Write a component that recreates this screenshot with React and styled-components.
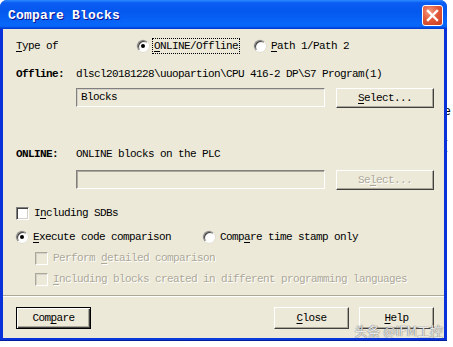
import styled, { createGlobalStyle } from "styled-components";

const GlobalStyle = createGlobalStyle`
  html, body {
    margin: 0;
    padding: 0;
    background: #ffffff;
    overflow: hidden;
  }
  * {
    box-sizing: border-box;
  }
`;

const FONT = `"Liberation Mono", "DejaVu Sans Mono", monospace`;

export default function App() {
  return (
    <>
      <GlobalStyle />
      <Screen>
        <Window>
          <TitleBar>
            <Title>Compare Blocks</Title>
            <CloseBox aria-label="Close">
              <svg width="13" height="13" viewBox="0 0 13 13">
                <path
                  d="M2 2 L11 11 M11 2 L2 11"
                  stroke="#fff"
                  strokeWidth="2.4"
                  strokeLinecap="square"
                />
              </svg>
            </CloseBox>
          </TitleBar>

          <Body>
            <Row $top={9}>
              <FieldLabel $width={121}>
                <u>T</u>ype of
              </FieldLabel>
              <Option $width={117}>
                <Radio $checked />
                <Focused>
                  <u>O</u>NLINE/Offline
                </Focused>
              </Option>
              <Option>
                <Radio />
                <Text>
                  <u>P</u>ath 1/Path 2
                </Text>
              </Option>
            </Row>

            <Row $top={12}>
              <BoldLabel>Offline:</BoldLabel>
              <Text>dlscl20181228\uuopartion\CPU 416-2 DP\S7 Program(1)</Text>
            </Row>

            <FieldRow $top={6}>
              <Field>Blocks</Field>
              <Button $width={98} $height={20}>
                <u>S</u>elect...
              </Button>
            </FieldRow>

            <Row $top={38}>
              <BoldLabel>ONLINE:</BoldLabel>
              <Text>ONLINE blocks on the PLC</Text>
            </Row>

            <FieldRow $top={8}>
              <Field $disabled />
              <Button $width={98} $height={20} $disabled>
                Se<u>l</u>ect...
              </Button>
            </FieldRow>

            <Row $top={15}>
              <Option>
                <Checkbox />
                <Text>
                  I<u>n</u>cluding SDBs
                </Text>
              </Option>
            </Row>

            <Row $top={8}>
              <Option $width={187}>
                <Radio $checked />
                <Text>
                  <u>E</u>xecute code comparison
                </Text>
              </Option>
              <Option>
                <Radio />
                <Text>
                  Comp<u>a</u>re time stamp only
                </Text>
              </Option>
            </Row>

            <Row $top={5} $indent={19}>
              <Option>
                <Checkbox $disabled />
                <Text $disabled>
                  Perform <u>d</u>etailed comparison
                </Text>
              </Option>
            </Row>

            <Row $top={5} $indent={19}>
              <Option>
                <Checkbox $disabled />
                <Text $disabled>
                  <u>I</u>ncluding blocks created in different programming
                  languages
                </Text>
              </Option>
            </Row>

            <Separator />

            <ButtonBar>
              <Button $width={75} $height={22} $default>
                Com<u>p</u>are
              </Button>
              <Spacer />
              <Button $width={75} $height={22}>
                <u>C</u>lose
              </Button>
              <Button $width={75} $height={22}>
                <u>H</u>elp
              </Button>
            </ButtonBar>

            <Watermark>头条 @iFM工控</Watermark>
          </Body>
        </Window>
        <Backdrop>
          <span>e</span>
          <span>[</span>
        </Backdrop>
      </Screen>
    </>
  );
}

const Screen = styled.div`
  display: flex;
  align-items: flex-start;
  width: 453px;
  height: 347px;
`;

const Window = styled.div`
  width: 447px;
  height: 341px;
  flex-shrink: 0;
  display: flex;
  flex-direction: column;
  border-radius: 7px 7px 0 0;
  background: linear-gradient(to right, #0831d9, #0a3cdb 50%, #0831d9);
  padding: 0 3px 3px 3px;
  box-shadow: inset 0 -1px 0 #001ea0;
`;

const TitleBar = styled.div`
  height: 29px;
  margin: 0 -3px;
  padding: 0 4px 0 8px;
  display: flex;
  align-items: center;
  justify-content: space-between;
  border-radius: 7px 7px 0 0;
  background: linear-gradient(
    to bottom,
    #2a8cff 0%,
    #0a5cf2 10%,
    #0558ee 40%,
    #0867fa 85%,
    #0662f6 92%,
    #003dd7 97%,
    #003dd7 100%
  );
`;

const Title = styled.span`
  font-family: ${FONT};
  font-weight: bold;
  font-size: 13px;
  letter-spacing: 0.2px;
  color: #ffffff;
  text-shadow: 1px 1px 0 #0f1089;
  padding-top: 1px;
`;

const CloseBox = styled.div`
  width: 21px;
  height: 21px;
  margin-top: 2px;
  display: flex;
  align-items: center;
  justify-content: center;
  border: 1px solid #ffffff;
  border-radius: 3px;
  background: radial-gradient(
    circle at 35% 30%,
    #f39c83 0%,
    #e35a3b 45%,
    #c7391c 100%
  );
`;

const Body = styled.div`
  position: relative;
  flex: 1;
  display: flex;
  flex-direction: column;
  background: #ece9d8;
  padding: 0 10px 9px 13px;
  font-family: ${FONT};
  font-size: 11px;
  letter-spacing: -0.6px;
  color: #000000;

  u {
    text-decoration: underline;
    text-underline-offset: 2px;
  }
`;

const Row = styled.div`
  display: flex;
  align-items: center;
  height: 16px;
  margin-top: ${(p) => p.$top}px;
  padding-left: ${(p) => p.$indent || 0}px;
  white-space: nowrap;
`;

const FieldLabel = styled.span`
  width: ${(p) => p.$width}px;
  flex-shrink: 0;
`;

const BoldLabel = styled.span`
  width: 60px;
  flex-shrink: 0;
  font-weight: bold;
`;

const Text = styled.span`
  color: ${(p) => (p.$disabled ? "#aca899" : "#000")};
  text-shadow: ${(p) => (p.$disabled ? "1px 1px 0 #ffffff" : "none")};
`;

const Focused = styled.span`
  outline: 1px dotted #000;
  outline-offset: 1px;
`;

const Option = styled.label`
  display: flex;
  align-items: center;
  gap: 5px;
  width: ${(p) => (p.$width ? `${p.$width}px` : "auto")};
  flex-shrink: 0;
`;

const Radio = styled.span`
  position: relative;
  width: 12px;
  height: 12px;
  flex-shrink: 0;
  border-radius: 50%;
  background: radial-gradient(circle at 60% 60%, #ffffff 40%, #dcdad0 100%);
  border: 1px solid;
  border-color: #808080 #ffffff #ffffff #808080;
  box-shadow: inset 1px 1px 0 #404040, 0 0 0 0.5px #d4d0c8;

  &::after {
    content: "";
    display: ${(p) => (p.$checked ? "block" : "none")};
    position: absolute;
    left: 3px;
    top: 3px;
    width: 4px;
    height: 4px;
    border-radius: 50%;
    background: #000;
  }
`;

const Checkbox = styled.span`
  width: 13px;
  height: 13px;
  flex-shrink: 0;
  background: ${(p) => (p.$disabled ? "#ece9d8" : "#ffffff")};
  border: 1px solid;
  border-color: ${(p) =>
    p.$disabled
      ? "#aca899 #ffffff #ffffff #aca899"
      : "#808080 #ffffff #ffffff #808080"};
  box-shadow: ${(p) =>
    p.$disabled
      ? "inset 1px 1px 0 #d4d0c8"
      : "inset 1px 1px 0 #404040, inset -1px -1px 0 #d4d0c8"};
`;

const FieldRow = styled.div`
  display: flex;
  align-items: flex-start;
  gap: 11px;
  height: 20px;
  margin-top: ${(p) => p.$top}px;
  padding-left: 60px;
`;

const Field = styled.div`
  width: 250px;
  height: 19px;
  padding: 1px 4px;
  line-height: 15px;
  background: #ece9d8;
  border: 1px solid;
  border-color: #808080 #ffffff #ffffff #808080;
  box-shadow: ${(p) =>
    p.$disabled ? "inset 1px 1px 0 #aca899" : "inset 1px 1px 0 #d4d0c8"};
`;

const Button = styled.div`
  width: ${(p) => p.$width}px;
  height: ${(p) => p.$height}px;
  flex-shrink: 0;
  display: flex;
  align-items: center;
  justify-content: center;
  background: #ece9d8;
  border: 1px solid;
  border-color: ${(p) =>
    p.$default ? "#000" : "#ffffff #404040 #404040 #ffffff"};
  box-shadow: ${(p) =>
    p.$default
      ? "inset 1px 1px 0 #ffffff, inset -1px -1px 0 #404040, inset -2px -2px 0 #aca899"
      : "inset -1px -1px 0 #aca899"};
  color: ${(p) => (p.$disabled ? "#aca899" : "#000")};
  text-shadow: ${(p) => (p.$disabled ? "1px 1px 0 #ffffff" : "none")};
`;

const Separator = styled.div`
  height: 2px;
  margin: 8px -10px 0 -13px;
  border-top: 1px solid #aca899;
  border-bottom: 1px solid #ffffff;
`;

const ButtonBar = styled.div`
  display: flex;
  align-items: center;
  gap: 10px;
  margin-top: 10px;
`;

const Spacer = styled.div`
  flex: 1;
`;

const Watermark = styled.span`
  position: absolute;
  right: 1px;
  bottom: 0;
  font-family: "Noto Sans CJK SC", "Noto Sans", sans-serif;
  font-size: 13px;
  line-height: 14px;
  letter-spacing: 0;
  color: rgba(255, 255, 255, 0.85);
  text-shadow: 0 0 1px #6e6e6e, 0 0 1px #6e6e6e;
`;

const Backdrop = styled.div`
  width: 6px;
  height: 347px;
  overflow: hidden;
  display: flex;
  flex-direction: column;
  padding-top: 104px;
  gap: 20px;
  font-family: "Liberation Sans", sans-serif;
  font-size: 12px;
  line-height: 14px;
  color: #000;

  span {
    margin-left: -3px;
  }
`;
